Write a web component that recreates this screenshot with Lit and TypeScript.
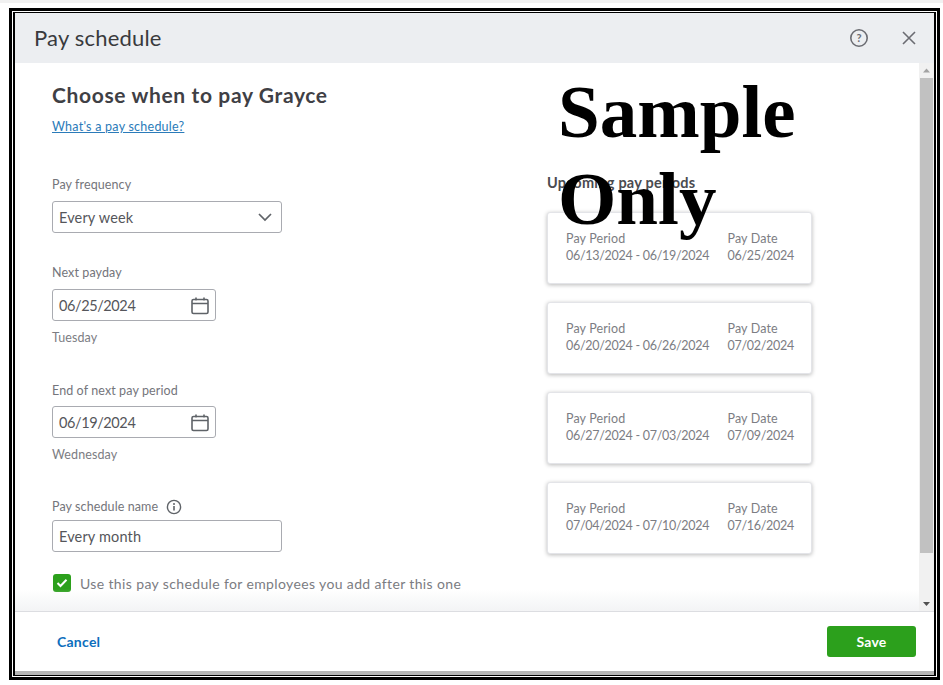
import { LitElement, html, css, svg } from "lit";
import { customElement } from "lit/decorators.js";

const cards = [
  ["06/13/2024 - 06/19/2024", "06/25/2024"],
  ["06/20/2024 - 06/26/2024", "07/02/2024"],
  ["06/27/2024 - 07/03/2024", "07/09/2024"],
  ["07/04/2024 - 07/10/2024", "07/16/2024"],
];

const calendar = svg`<path d="M3.5 4.5h13a1.5 1.5 0 0 1 1.5 1.5v11a1.5 1.5 0 0 1-1.5 1.5h-13A1.5 1.5 0 0 1 2 17V6a1.5 1.5 0 0 1 1.5-1.5zM2 8.5h16M6 2.5v3M14 2.5v3" fill="none" stroke="#5f6368" stroke-width="1.6"/>`;

@customElement("app-root")
export class AppRoot extends LitElement {
  static styles = css`
    :host { display: block; width: 943px; height: 685px; background: #fff; font-family: Lato, "Noto Sans", sans-serif; color: #393a3d; overflow: hidden; position: relative; }
    .topstrip { height: 3px; background: #f1f1f1; }
    .frame { margin: 5px 3px 0 9px; height: 672px; box-sizing: border-box; border: 3px solid #000; padding: 1px; background: #fff; }
    .frame2 { height: 100%; box-sizing: border-box; border: 1px solid #000; border-left-width: 2px; border-right-width: 2px; display: flex; flex-direction: column; background: #fff; }
    .header { height: 50px; flex: none; box-sizing: border-box; background: #eceef1; display: flex; align-items: center; padding: 0 17px 0 19px; }
    .header h1 { flex: 1; margin: 0; padding-bottom: 2px; font-size: 22px; font-weight: 400; color: #393a3d; letter-spacing: 0.2px; }
    .hicon { display: block; }
    .hicon.close { margin-left: 32px; }
    .middle { height: 548px; flex: none; display: flex; position: relative; }
    .content { flex: 1; display: grid; grid-template-columns: 495px 265px; padding: 21px 0 0 37px; position: relative; background: #fff; }
    .fade { position: absolute; left: 0; right: 0; bottom: 0; height: 22px; background: linear-gradient(rgba(244,245,246,0), rgba(240,241,243,0.8)); pointer-events: none; }
    .title { margin: 0; font-size: 21px; line-height: 22px; font-weight: 700; color: #3f4045; letter-spacing: 0.64px; }
    .link { display: block; margin-top: 13px; font-size: 12.5px; line-height: 16px; color: #2b7bb9; text-decoration: underline; letter-spacing: 0.24px; }
    .label { display: block; font-size: 12.5px; line-height: 16px; color: #74757b; letter-spacing: 0.1px; }
    .label.freq { margin-top: 42px; }
    .label.next { margin-top: 32px; }
    .label.end { margin-top: 37px; }
    .label.name { margin-top: 36px; display: flex; align-items: center; gap: 8px; }
    .field { box-sizing: border-box; height: 32px; margin-top: 8px; border: 1px solid #a9abb1; border-radius: 3px; display: flex; align-items: center; justify-content: space-between; padding: 0 5px 0 6px; font-size: 14.5px; color: #55565b; letter-spacing: 0.15px; background: #fff; }
    .field.wide { width: 230px; padding-right: 9px; }
    .field.date { width: 164px; letter-spacing: -0.4px; }
    .field.tight { margin-top: 7px; }
    .field.nm { margin-top: 5px; }
    .sub { margin-top: 9px; font-size: 12.5px; line-height: 16px; color: #7c7d83; letter-spacing: 0.1px; }
    .check { display: flex; align-items: center; margin: 22px 0 0 1px; gap: 9px; font-size: 14px; color: #7b7c82; letter-spacing: 0.37px; white-space: nowrap; }
    .box { width: 18px; height: 18px; border-radius: 3px; background: #2ca01c; display: flex; align-items: center; justify-content: center; flex: none; }
    .right h2 { margin: 91px 0 0; font-size: 14.5px; line-height: 16px; font-weight: 700; color: #4a4b50; letter-spacing: 0.25px; }
    .cards { margin-top: 21px; display: flex; flex-direction: column; gap: 18px; }
    .card { box-sizing: border-box; height: 72px; border-radius: 3px; background: #fff; border: 1px solid #e3e4e8; box-shadow: 0 1px 4px rgba(0,0,0,0.28); padding: 17px 17px 0 18px; display: flex; justify-content: space-between; font-size: 12.5px; line-height: 17px; color: #7c7d83; letter-spacing: 0.12px; }
    .card span { display: block; white-space: nowrap; }
    .card .num { letter-spacing: -0.28px; }
    .scroll { width: 15px; flex: none; background: #f1f1f1; display: flex; flex-direction: column; align-items: center; }
    .arrow { height: 15px; width: 15px; flex: none; display: block; }
    .thumb { width: 13px; height: 475px; background: #c1c1c1; flex: none; }
    .spacer { flex: 1; }
    .footer { flex: 1; border-top: 1px solid #dcdde1; box-sizing: border-box; background: #fff; display: flex; align-items: center; justify-content: space-between; padding: 0 18px 0 42px; }
    .cancel { font-size: 14px; font-weight: 700; color: #0d6ebd; letter-spacing: 0.25px; }
    .save { width: 89px; height: 31px; border-radius: 3px; background: #2ca01c; color: #fff; font-size: 14px; font-weight: 700; display: flex; align-items: center; justify-content: center; letter-spacing: 0.2px; }
    .base { height: 4px; background: #b5b5b5; flex: none; }
    .stamp { position: absolute; left: 558px; top: 68px; margin: 0; font-family: "Liberation Serif", serif; font-size: 75px; line-height: 87px; font-weight: 700; color: #000; width: 260px; }
  `;

  render() {
    return html`
      <div class="topstrip"></div>
      <div class="frame"><div class="frame2">
        <div class="header">
          <h1>Pay schedule</h1>
          <svg class="hicon" width="20" height="20" viewBox="0 0 20 20"><circle cx="10" cy="10" r="8.2" fill="none" stroke="#6b6c72" stroke-width="1.6"/><text x="10" y="14" text-anchor="middle" font-size="11" font-weight="700" fill="#6b6c72" font-family="Lato">?</text></svg>
          <svg class="hicon close" width="16" height="16" viewBox="0 0 16 16"><path d="M2 2l12 12M14 2L2 14" stroke="#6b6c72" stroke-width="1.6" fill="none"/></svg>
        </div>
        <div class="middle">
          <div class="content">
            <div>
              <h2 class="title">Choose when to pay Grayce</h2>
              <a class="link">What's a pay schedule?</a>
              <span class="label freq">Pay frequency</span>
              <div class="field wide">Every week
                <svg width="14" height="9" viewBox="0 0 14 9"><path d="M1 1l6 6 6-6" fill="none" stroke="#5f6368" stroke-width="1.7"/></svg>
              </div>
              <span class="label next">Next payday</span>
              <div class="field date">06/25/2024<svg width="20" height="20" viewBox="0 0 20 20">${calendar}</svg></div>
              <div class="sub">Tuesday</div>
              <span class="label end">End of next pay period</span>
              <div class="field date tight">06/19/2024<svg width="20" height="20" viewBox="0 0 20 20">${calendar}</svg></div>
              <div class="sub">Wednesday</div>
              <span class="label name">Pay schedule name
                <svg width="16" height="16" viewBox="0 0 16 16"><circle cx="8" cy="8" r="6.6" fill="none" stroke="#5f6368" stroke-width="1.4"/><path d="M8 7v4.4" stroke="#5f6368" stroke-width="1.6"/><circle cx="8" cy="4.9" r="1" fill="#5f6368"/></svg>
              </span>
              <div class="field wide nm">Every month</div>
              <div class="check">
                <div class="box"><svg width="12" height="10" viewBox="0 0 12 10"><path d="M1.5 5l3 3 6-6.2" fill="none" stroke="#fff" stroke-width="2"/></svg></div>
                Use this pay schedule for employees you add after this one
              </div>
            </div>
            <div class="right">
              <h2>Upcoming pay periods</h2>
              <div class="cards">
                ${cards.map(([p, d]) => html`<div class="card">
                  <div><span>Pay Period</span><span class="num">${p}</span></div>
                  <div><span>Pay Date</span><span class="num">${d}</span></div>
                </div>`)}
              </div>
            </div>
            <div class="fade"></div>
          </div>
          <div class="scroll">
            <svg class="arrow" viewBox="0 0 15 15"><path d="M7.5 5.5l-3.5 4h7z" fill="#a3a3a3"/></svg>
            <div class="thumb"></div>
            <div class="spacer"></div>
            <svg class="arrow" viewBox="0 0 15 15"><path d="M7.5 10l-3.5-4h7z" fill="#505050"/></svg>
          </div>
        </div>
        <div class="footer">
          <span class="cancel">Cancel</span>
          <span class="save">Save</span>
        </div>
        <div class="base"></div>
      </div></div>
      <p class="stamp">Sample Only</p>
    `;
  }
}
